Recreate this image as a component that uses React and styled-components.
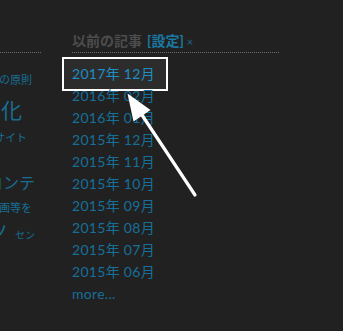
import React from 'react';
import styled, { createGlobalStyle } from 'styled-components';

const GlobalStyle = createGlobalStyle`
  html, body { margin: 0; padding: 0; background: #212121; }
  body { font-family: Lato, "Noto Sans CJK JP", sans-serif; }
`;

const Page = styled.div`
  position: relative;
  width: 343px;
  height: 331px;
  overflow: hidden;
  background: #212121;
  display: flex;
  gap: 31px;
`;

const SideColumn = styled.div`
  width: 41px;
  flex-shrink: 0;
  overflow: hidden;
`;

const MainColumn = styled.div`
  width: 207px;
  flex-shrink: 0;
`;

const Head = styled.div`
  height: 20px;
  padding-top: 31px;
  padding-bottom: 1px;
  border-bottom: 1px dotted #6a6a6a;
  font-size: 14px;
  line-height: 20px;
  font-weight: 700;
  color: #4c4c4c;
  white-space: nowrap;
`;

const Setting = styled.span`
  color: #1a7aa3;
  margin-left: 5px;
`;

const Close = styled.span`
  color: #1f6786;
  font-size: 11px;
  font-weight: 400;
  margin-left: 3px;
`;

const SideLine = styled.div`
  display: flex;
  justify-content: flex-end;
  align-items: baseline;
  white-space: nowrap;
  margin-top: ${p => p.$mt || 0}px;
  height: ${p => p.$h}px;
  line-height: ${p => p.$h}px;
  padding-right: ${p => p.$pr}px;
  font-size: ${p => p.$size}px;
  color: #186e94;
`;

const Small = styled.span`
  font-size: 10px;
  margin-left: 6px;
`;

const List = styled.ul`
  list-style: none;
  margin: 9px 0 0;
  padding: 0;
`;

const Item = styled.li`
  height: 22px;
  line-height: 22px;
`;

const Link = styled.a`
  display: inline-block;
  font-size: 14px;
  letter-spacing: 0.3px;
  color: ${p => (p.$marked ? '#1f8ec2' : '#16709a')};
  text-decoration: none;
  white-space: nowrap;
  ${p => p.$marked && `
    background: #2c2c2c;
    box-shadow: 0 0 0 2px #ffffff;
    padding: 4px 11px 4px 8px;
    margin: -4px -11px -4px -8px;
    line-height: 22px;
  `}
`;

const ArrowLayer = styled.svg`
  position: absolute;
  left: 0;
  top: 0;
  pointer-events: none;
`;

const archives = [
  '2017年 12月', '2016年 02月', '2016年 01月', '2015年 12月', '2015年 11月',
  '2015年 10月', '2015年 09月', '2015年 08月', '2015年 07月', '2015年 06月',
];

const App = () => (
  <>
    <GlobalStyle />
    <Page>
      <SideColumn>
        <Head />
        <SideLine $mt={17} $h={20} $pr={9} $size={11}>ウェブの原則</SideLine>
        <SideLine $h={40} $pr={19} $size={21}>最適化</SideLine>
        <SideLine $h={16} $pr={14} $size={11}>ウェブサイト</SideLine>
        <SideLine $mt={27} $h={20} $pr={6} $size={16}>コンテ</SideLine>
        <SideLine $h={30} $pr={9} $size={11}>動画等を</SideLine>
        <SideLine $h={18} $pr={6} $size={18}>ノ<Small>セン</Small></SideLine>
      </SideColumn>
      <MainColumn>
        <Head>
          以前の記事<Setting>[設定]</Setting><Close>×</Close>
        </Head>
        <List>
          {archives.map((a, i) => (
            <Item key={a}>
              <Link href="#" $marked={i === 0}>{a}</Link>
            </Item>
          ))}
          <Item><Link href="#">more...</Link></Item>
        </List>
      </MainColumn>
      <ArrowLayer width="343" height="331" viewBox="0 0 343 331">
        <line x1="195" y1="195" x2="136" y2="106" stroke="#ffffff" strokeWidth="3.2" strokeLinecap="round" />
        <polygon points="127.5,93.5 150.5,110 133.5,121.5" fill="#ffffff" />
      </ArrowLayer>
    </Page>
  </>
);

export default App;
